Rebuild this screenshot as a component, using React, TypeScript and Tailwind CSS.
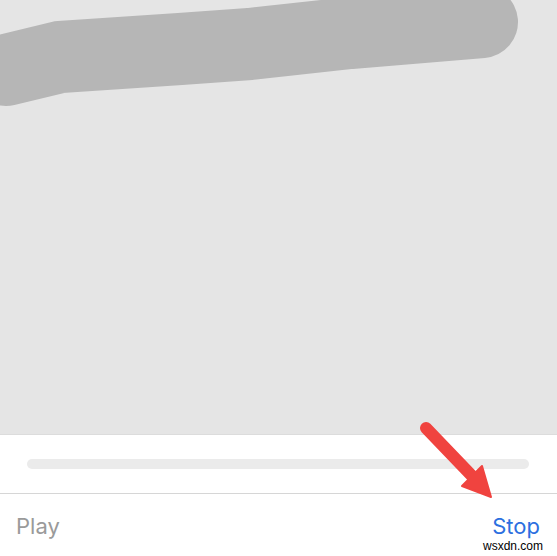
export default function App() {
  return (
    <div className="relative w-[557px] h-[556px] overflow-hidden bg-white" style={{ fontFamily: 'Inter, "Liberation Sans", sans-serif' }}>
      {/* drawing canvas */}
      <div className="h-[435px] bg-[#e5e5e5] border-b border-[#dcdcdc]">
        <svg width="557" height="434" viewBox="0 0 557 434">
          <polyline
            points="6,70 60,57 180,49 250,44 350,33 482,22"
            fill="none"
            stroke="#b6b6b6"
            strokeWidth="72"
            strokeLinecap="round"
            strokeLinejoin="round"
          />
        </svg>
      </div>

      {/* progress track */}
      <div className="h-[59px] flex items-center pl-[27px] pr-[28px] border-b border-[#d6d6d6]">
        <div className="w-full h-[10px] rounded-full bg-[#ebebeb]" />
      </div>

      {/* toolbar */}
      <div className="h-[61px] flex items-center justify-between pl-[16px] pr-[17px] pt-[3px]">
        <span className="text-[22px] text-[#9a9a9a]">Play</span>
        <span className="text-[22px] text-[#2c6fe0]">Stop</span>
      </div>

      {/* annotation arrow */}
      <svg className="absolute left-0 top-0 pointer-events-none" width="557" height="556" viewBox="0 0 557 556">
        <line x1="426" y1="428" x2="473" y2="477" stroke="#f0433f" strokeWidth="12" strokeLinecap="round" />
        <polygon points="491,497 462,486 482,466" fill="#f0433f" stroke="#f0433f" strokeWidth="2" strokeLinejoin="round" />
      </svg>

      <span className="absolute left-[483px] top-[540px] text-[12px] leading-none text-black" style={{ fontFamily: '"Liberation Sans", sans-serif' }}>
        wsxdn.com
      </span>
    </div>
  )
}
